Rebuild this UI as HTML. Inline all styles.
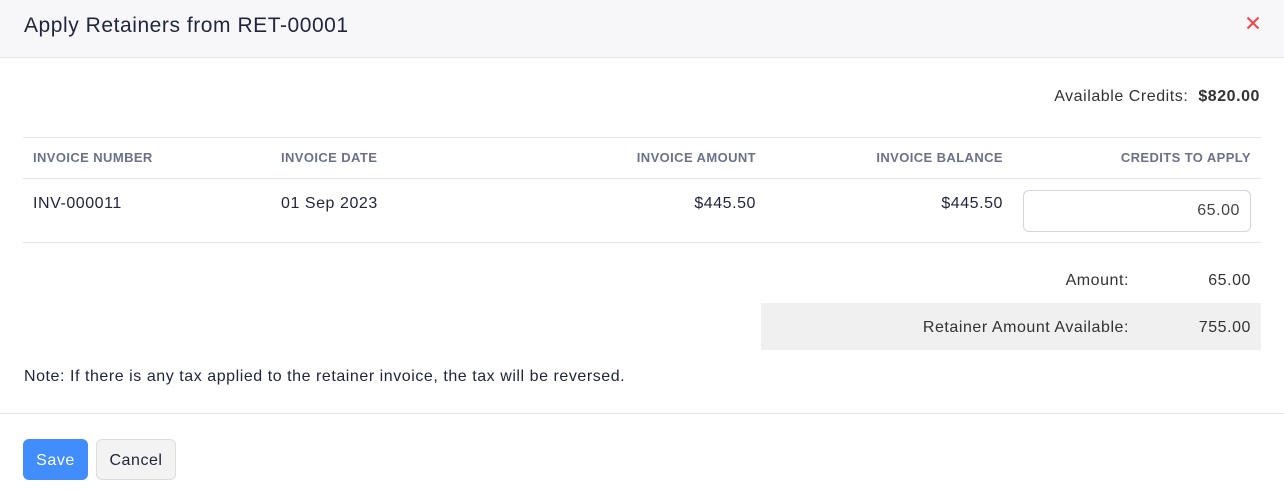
<!DOCTYPE html>
<html><head><meta charset="utf-8"><style>
*{margin:0;padding:0;box-sizing:border-box}
body{width:1284px;height:499px;background:#fff;font-family:"Liberation Sans",sans-serif;color:#21263c;position:relative;overflow:hidden;font-size:16px;letter-spacing:0.55px}
.a{position:absolute;white-space:nowrap}
.hdr{left:0;top:0;width:1284px;height:58px;background:#f7f7fa;border-bottom:1px solid #e6e6ea}
.line{position:absolute;height:1px;background:#e8e8ec}
.th{font-size:13px;font-weight:bold;color:#6c718a;top:150px;letter-spacing:0.4px}
</style></head><body>
<div class="a hdr"></div>
<div class="a" style="left:24px;top:14px;font-size:21px;color:#21263c;letter-spacing:0.55px">Apply Retainers from RET-00001</div>
<svg class="a" style="left:1246px;top:16px" width="14" height="14" viewBox="0 0 14 14"><path d="M1.5 1.5L12.5 12.5M12.5 1.5L1.5 12.5" stroke="#f0454d" stroke-width="2"/></svg>
<div class="a" style="right:24px;top:88px;color:#333">Available Credits:&nbsp; <b>$820.00</b></div>
<div class="line" style="left:23px;top:137px;width:1238px"></div>
<div class="line" style="left:23px;top:178px;width:1238px"></div>
<div class="line" style="left:23px;top:242px;width:1238px"></div>
<div class="a th" style="left:33px">INVOICE NUMBER</div>
<div class="a th" style="left:281px">INVOICE DATE</div>
<div class="a th" style="right:528px">INVOICE AMOUNT</div>
<div class="a th" style="right:281px">INVOICE BALANCE</div>
<div class="a th" style="right:33px">CREDITS TO APPLY</div>
<div class="a" style="left:33px;top:195px">INV-000011</div>
<div class="a" style="left:281px;top:195px">01 Sep 2023</div>
<div class="a" style="right:528px;top:195px">$445.50</div>
<div class="a" style="right:281px;top:195px">$445.50</div>
<div class="a" style="left:1023px;top:190px;width:228px;height:42px;border:1px solid #d5d5dd;border-radius:6px"></div>
<div class="a" style="right:44px;top:202px;color:#444">65.00</div>
<div class="a" style="right:155px;top:272px;color:#333">Amount:</div>
<div class="a" style="right:33px;top:272px;color:#333">65.00</div>
<div class="a" style="left:761px;top:303px;width:500px;height:47px;background:#f0f0f0"></div>
<div class="a" style="right:155px;top:319px;color:#333">Retainer Amount Available:</div>
<div class="a" style="right:33px;top:319px;color:#333">755.00</div>
<div class="a" style="left:24px;top:368px;color:#21263c">Note: If there is any tax applied to the retainer invoice, the tax will be reversed.</div>
<div class="line" style="left:0;top:413px;width:1284px"></div>
<div class="a" style="left:23px;top:439px;width:65px;height:41px;background:#408dfb;border-radius:6px;color:#fff;text-align:center;line-height:43px">Save</div>
<div class="a" style="left:96px;top:439px;width:80px;height:41px;background:#f3f3f3;border:1px solid #dcdcdc;border-radius:6px;color:#21263c;text-align:center;line-height:41px">Cancel</div>
</body></html>
